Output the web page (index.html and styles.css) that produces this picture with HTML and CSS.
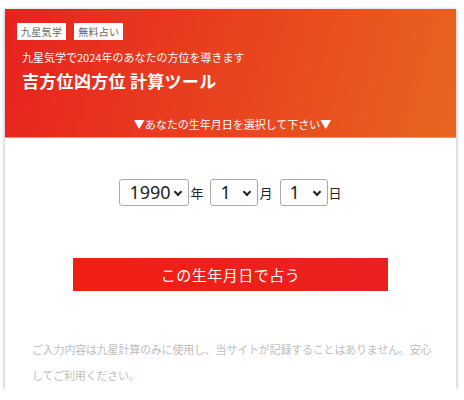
FILE: index.html
```html
<!DOCTYPE html>
<html lang="ja">
<head>
<meta charset="utf-8">
<title>吉方位凶方位 計算ツール</title>
<link rel="stylesheet" href="styles.css">
</head>
<body>
<div class="card">
  <div class="header">
    <div class="tags">
      <span class="tag">九星気学</span>
      <span class="tag">無料占い</span>
    </div>
    <p class="lead">九星気学で2024年のあなたの方位を導きます</p>
    <h1 class="title">吉方位凶方位 計算ツール</h1>
    <p class="prompt">▼あなたの生年月日を選択して下さい▼</p>
  </div>
  <div class="body">
    <div class="date-row">
      <span class="sel sel-year"><select><option>1990</option></select></span><span class="unit">年</span>
      <span class="sel sel-small"><select><option>1</option></select></span><span class="unit">月</span>
      <span class="sel sel-small"><select><option>1</option></select></span><span class="unit">日</span>
    </div>
    <div class="btn-row">
      <button class="submit">この生年月日で占う</button>
    </div>
    <p class="note">ご入力内容は九星計算のみに使用し、当サイトが記録することはありません。安心してご利用ください。</p>
  </div>
</div>
</body>
</html>
```

FILE: styles.css
```css
* { box-sizing: border-box; }
html, body { margin: 0; padding: 0; background: #fff; }
body {
  padding: 9px 8px 0 5px;
  font-family: "Noto Sans CJK JP", "Noto Sans", sans-serif;
}
.card {
  width: 451px;
  height: 380px;
  background: #fff;
  box-shadow: 0 1px 4px rgba(0,0,0,0.35);
  overflow: hidden;
}
.header {
  height: 129px;
  padding: 14px 12px 0 12px;
  background: linear-gradient(105deg, #e8221e 0%, #e8461f 55%, #e8661f 100%);
  border-bottom: 1px solid #f4907a;
  color: #fff;
}
.tags { display: flex; gap: 8px; height: 17px; }
.tag {
  background: #fff;
  color: #666;
  font-size: 10px;
  line-height: 17px;
  padding: 0 4px;
  letter-spacing: 0.3px;
}
.lead {
  margin: 9px 0 0 5px;
  font-size: 11px;
  line-height: 16px;
}
.title {
  margin: 4px 0 0 5px;
  font-size: 17px;
  line-height: 24px;
  font-weight: 700;
  letter-spacing: 0.3px;
}
.prompt {
  margin: 23px 0 0 0;
  text-align: center;
  font-size: 11px;
  line-height: 16px;
  padding-left: 4px;
}
.body { padding: 0 20px 0 24px; }
.date-row {
  display: flex;
  justify-content: center;
  align-items: center;
  margin-top: 41px;
  height: 27px;
  color: #222;
  padding-right: 4px;
}
.sel { position: relative; display: inline-block; height: 27px; }
.sel select {
  appearance: none;
  -webkit-appearance: none;
  height: 27px;
  border: 1px solid #a9a9a9;
  border-radius: 3px;
  background: #fff;
  color: #222;
  font-family: "Noto Sans", sans-serif;
  font-size: 18px;
  line-height: 25px;
  padding: 0 0 0 9px;
  margin: 0;
  outline: none;
}
.sel-year select { width: 70px; }
.sel-small select { width: 48px; }
.sel::after {
  content: "";
  position: absolute;
  right: 8px;
  top: 10px;
  width: 4px;
  height: 4px;
  border-right: 2px solid #222;
  border-bottom: 2px solid #222;
  transform: rotate(45deg);
  pointer-events: none;
}
.unit {
  font-size: 13px;
  margin: 0 7px 0 1px;
  line-height: 27px;
}
.unit:last-child { margin-right: 0; }
.btn-row { display: flex; justify-content: center; margin-top: 52px; padding-right: 4px; }
.submit {
  width: 315px;
  height: 33px;
  border: 0;
  border-radius: 0;
  background: linear-gradient(90deg, #f31e12, #ec2020);
  color: #fff;
  font-family: "Noto Sans CJK JP", sans-serif;
  font-size: 15px;
  letter-spacing: 0.5px;
  padding: 0;
}
.note {
  margin: 45px 0 0 3px;
  color: #bdbdbd;
  font-size: 11px;
  line-height: 26px;
  letter-spacing: -0.2px;
}
```
